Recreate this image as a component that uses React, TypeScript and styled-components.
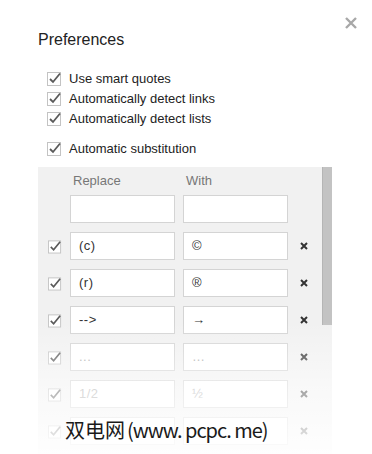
import * as React from "react";
import styled, { createGlobalStyle } from "styled-components";

interface Substitution {
  id: number;
  from: string;
  to: string;
}

const substitutions: Substitution[] = [
  { id: 1, from: "(c)", to: "©" },
  { id: 2, from: "(r)", to: "®" },
  { id: 3, from: "-->", to: "→" },
  { id: 4, from: "...", to: "…" },
  { id: 5, from: "1/2", to: "½" },
  { id: 6, from: "", to: "" },
];

const options = [
  "Use smart quotes",
  "Automatically detect links",
  "Automatically detect lists",
];

const GlobalStyle = createGlobalStyle`
  html, body {
    margin: 0;
    padding: 0;
    background: #ffffff;
  }
  body {
    font-family: "Liberation Sans", Arial, sans-serif;
    color: #222222;
  }
`;

const Dialog = styled.div`
  position: relative;
  width: 372px;
  height: 454px;
  overflow: hidden;
  background: #ffffff;
`;

const Title = styled.h1`
  margin: 0;
  padding: 30px 0 0 38px;
  font-size: 16px;
  font-weight: normal;
  line-height: 20px;
  color: #222222;
`;

const CloseButton = styled.div`
  position: absolute;
  top: 15px;
  left: 345px;
  width: 12px;
  height: 12px;
`;

const OptionList = styled.div`
  display: flex;
  flex-direction: column;
  padding: 18px 0 0 47px;
`;

const Option = styled.label<{ $spaced?: boolean }>`
  display: flex;
  align-items: center;
  gap: 7px;
  height: 20px;
  margin-top: ${(p) => (p.$spaced ? "10px" : "0")};
  font-size: 13px;
  color: #222222;
`;

const Panel = styled.div`
  position: relative;
  display: flex;
  margin: 9px 0 0 38px;
  width: 294px;
  height: 287px;
  background: #f1f1f1;
  overflow: hidden;
`;

const Content = styled.div`
  flex: 1;
  padding-left: 10px;
`;

const Grid = styled.div`
  display: grid;
  grid-template-columns: 14px 105px 105px 16px;
  column-gap: 8px;
  row-gap: 9px;
  align-items: center;
`;

const HeaderCell = styled.div`
  height: 28px;
  line-height: 28px;
  font-size: 13px;
  color: #777777;
  padding-left: 3px;
  margin-bottom: -9px;
`;

const Field = styled.div<{ $muted?: boolean }>`
  box-sizing: border-box;
  height: 28px;
  line-height: 26px;
  padding: 0 8px;
  border: 1px solid #d4d4d4;
  background: #ffffff;
  font-family: "Liberation Sans", "DejaVu Sans", sans-serif;
  font-size: 13px;
  color: ${(p) => (p.$muted ? "#aaaaaa" : "#333333")};
  letter-spacing: 0.5px;
`;

const Track = styled.div`
  width: 10px;
  flex: none;
`;

const Thumb = styled.div`
  height: 158px;
  background: #c3c3c3;
  border-left: 1px solid #b5b5b5;
  box-sizing: border-box;
`;

const Fade = styled.div`
  position: absolute;
  left: 0;
  right: 0;
  top: 155px;
  bottom: 0;
  background: linear-gradient(
    rgba(255, 255, 255, 0) 0%,
    rgba(255, 255, 255, 0.55) 50%,
    rgba(255, 255, 255, 0.92) 100%
  );
  pointer-events: none;
`;

const Watermark = styled.div`
  position: absolute;
  left: 65px;
  top: 415px;
  font-family: "Noto Sans CJK SC", sans-serif;
  font-size: 20px;
  line-height: 30px;
  color: #1a1a1a;
  white-space: nowrap;
`;

const WatermarkUrl = styled.span`
  letter-spacing: -1px;
  margin-left: 2px;
`;

const IconCell = styled.div`
  display: flex;
  align-items: center;
  justify-content: center;
`;

const Checkbox = () => (
  <svg width="15" height="15" viewBox="0 0 15 15">
    <rect x="0.5" y="1.5" width="13" height="13" fill="#ffffff" stroke="#c3c3c3" />
    <path d="M3 8 L6 11 L13 2.5" fill="none" stroke="#5a5a5a" strokeWidth="1.8" />
  </svg>
);

const RemoveIcon = () => (
  <svg width="8" height="8" viewBox="0 0 8 8">
    <path d="M1 1 L7 7 M7 1 L1 7" stroke="#333333" strokeWidth="2" />
  </svg>
);

export default () => {
  return (
    <Dialog>
      <GlobalStyle />
      <Title>Preferences</Title>
      <CloseButton>
        <svg width="12" height="12" viewBox="0 0 12 12">
          <path d="M1 1 L11 11 M11 1 L1 11" stroke="#a8a8a8" strokeWidth="2.4" />
        </svg>
      </CloseButton>
      <OptionList>
        {options.map((label) => (
          <Option key={label}>
            <Checkbox />
            {label}
          </Option>
        ))}
        <Option $spaced>
          <Checkbox />
          Automatic substitution
        </Option>
      </OptionList>
      <Panel>
        <Content>
          <Grid>
            <div />
            <HeaderCell>Replace</HeaderCell>
            <HeaderCell>With</HeaderCell>
            <div />
            <div />
            <Field />
            <Field />
            <div />
            {substitutions.map(({ id, from, to }) => (
              <React.Fragment key={id}>
                <IconCell>
                  <Checkbox />
                </IconCell>
                <Field $muted={id >= 4}>{from}</Field>
                <Field $muted={id >= 4}>{to}</Field>
                <IconCell>
                  <RemoveIcon />
                </IconCell>
              </React.Fragment>
            ))}
          </Grid>
        </Content>
        <Track>
          <Thumb />
        </Track>
        <Fade />
      </Panel>
      <Watermark>
        双电网<WatermarkUrl>(www. pcpc. me)</WatermarkUrl>
      </Watermark>
    </Dialog>
  );
};
